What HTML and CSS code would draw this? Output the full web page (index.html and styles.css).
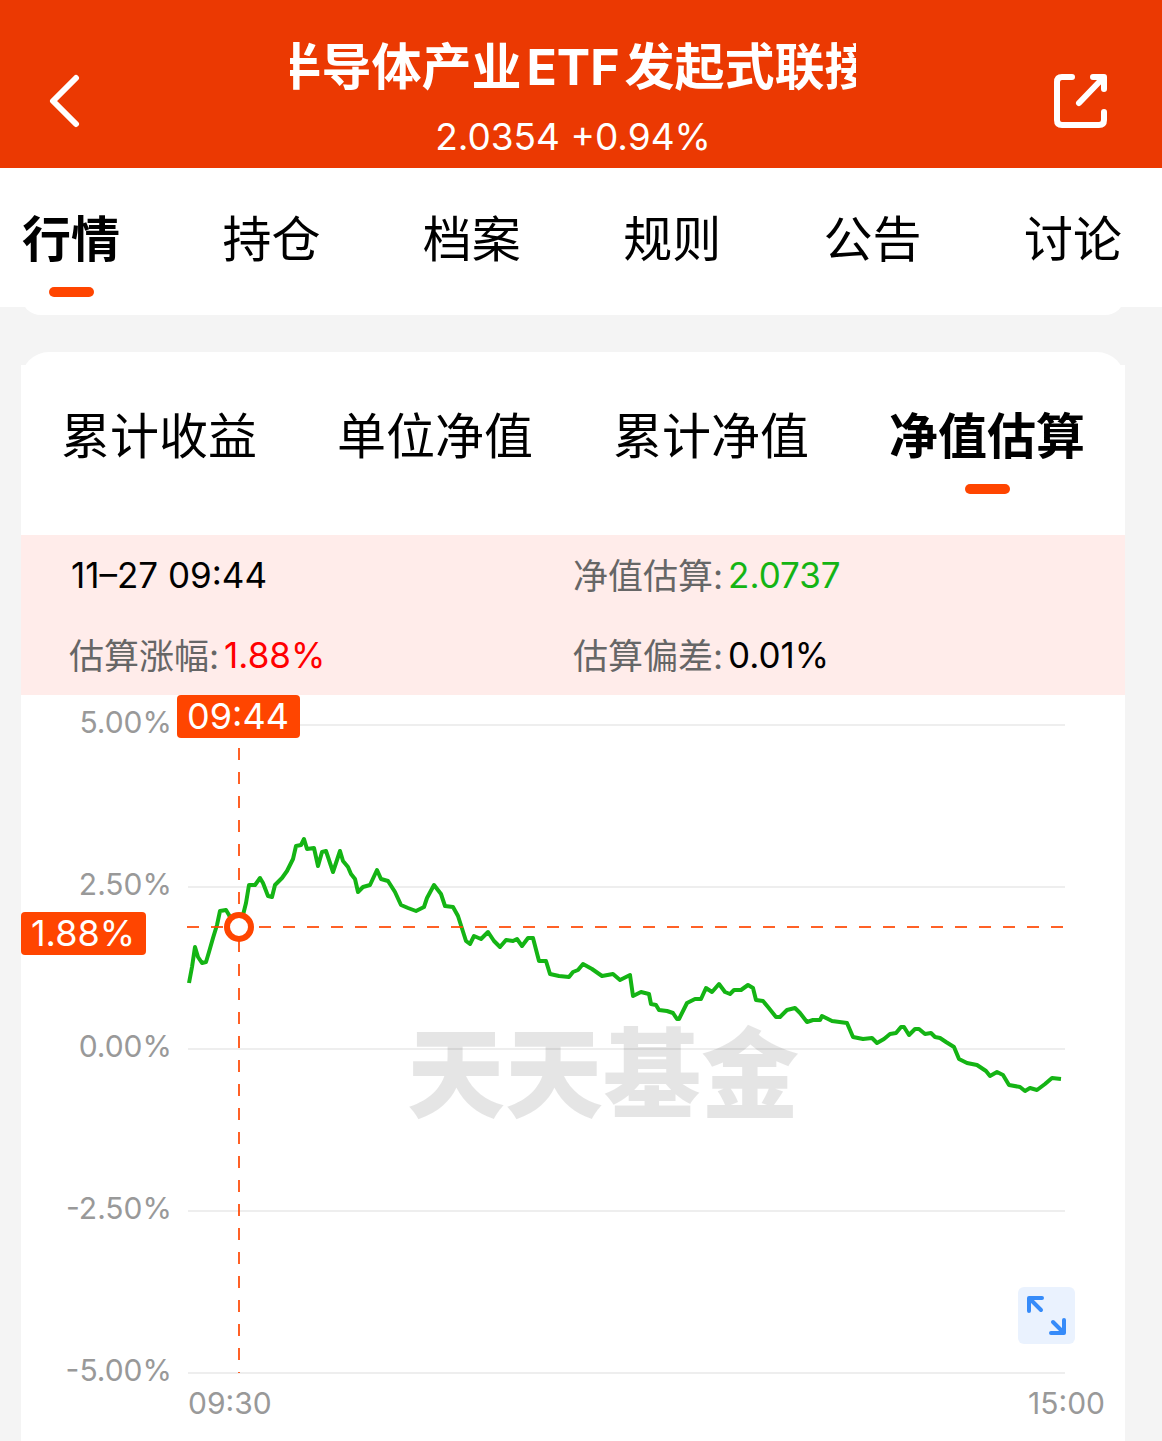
FILE: index.html
```html
<!DOCTYPE html>
<html lang="zh-CN">
<head>
    <meta charset="UTF-8">
    <meta name="viewport" content="width=device-width, initial-scale=1.0">
    <title>半导体产业ETF发起式联接</title>
    <link rel="stylesheet" href="styles.css">
</head>
<body>

    <header class="header">
        <button type="button" class="icon-button" aria-label="返回">
            <svg width="32" height="60" viewBox="0 0 32 60">
                <path d="M28 7 L5 30 L28 53" />
            </svg>
        </button>
        <div class="fund">
            <h1 class="fund-name"><span>半导体产业<span class="latin">ETF</span>发起式联接</span></h1>
            <p class="fund-price">2.0354 +0.94%</p>
        </div>
        <button type="button" class="icon-button" aria-label="分享">
            <svg width="60" height="60" viewBox="0 0 60 60">
                <path d="M22 6 H12 Q7 6 7 11 V49 Q7 54 12 54 H49 Q54 54 54 49 V41" />
                <path d="M43 6 H54 V18 M53 7 L29 32" />
            </svg>
        </button>
    </header>

    <nav class="tabs">
        <a href="#quote" class="tab active">行情</a>
        <a href="#holdings" class="tab">持仓</a>
        <a href="#archive" class="tab">档案</a>
        <a href="#rules" class="tab">规则</a>
        <a href="#notice" class="tab">公告</a>
        <a href="#discuss" class="tab">讨论</a>
    </nav>

    <main class="content">
        <div class="card-end"></div>

        <section class="card">
            <div class="card-body">
                <div class="chart-tabs">
                    <button type="button" class="tab">累计收益</button>
                    <button type="button" class="tab">单位净值</button>
                    <button type="button" class="tab">累计净值</button>
                    <button type="button" class="tab active">净值估算</button>
                </div>

                <div class="info">
                    <div class="info-item date">11–27 09:44</div>
                    <div class="info-item"><span class="label">净值估算:</span><span class="down">2.0737</span></div>
                    <div class="info-item"><span class="label">估算涨幅:</span><span class="up">1.88%</span></div>
                    <div class="info-item"><span class="label">估算偏差:</span><span>0.01%</span></div>
                </div>

                <div class="chart">
                    <svg class="chart-svg" viewBox="0 0 1104 746">
                        <!-- grid -->
                        <path class="grid" d="M167 30 H1044 M167 192 H1044 M167 354 H1044 M167 516 H1044 M167 678 H1044" />
                        <text class="watermark" x="582" y="415">天天基金</text>

                        <!-- axis labels -->
                        <text class="axis axis-y" x="151" y="38">5.00%</text>
                        <text class="axis axis-y" x="151" y="200">2.50%</text>
                        <text class="axis axis-y" x="151" y="362">0.00%</text>
                        <text class="axis axis-y" x="151" y="524">-2.50%</text>
                        <text class="axis axis-y" x="151" y="686">-5.00%</text>
                        <text class="axis" x="167" y="719">09:30</text>
                        <text class="axis axis-y" x="1084" y="719">15:00</text>

                        <!-- estimated value -->
                        <polyline class="line" points="168,288 171,272 174,252 177,262 181,268 185,267 188,257 192,243 196,230 199,216 205,215 208,220 212,230 218,232 222,220 225,208 228,190 234,190 239,183 242,188 247,201 251,202 254,190 261,183 266,176 272,164 275,151 280,150 283,144 286,154 293,153 297,171 301,157 305,156 312,177 319,156 322,166 327,172 330,179 334,184 337,197 342,192 349,190 356,175 360,184 367,186 374,197 380,210 387,213 395,216 403,212 406,203 413,190 420,199 424,211 432,212 437,221 445,246 449,249 453,241 460,244 467,237 473,246 479,252 485,245 492,246 496,244 501,251 507,243 512,243 518,266 525,266 529,279 538,281 548,282 552,277 557,275 562,269 571,274 581,281 592,279 599,285 609,280 612,301 620,297 628,299 630,309 635,310 638,315 646,316 652,318 656,324 658,324 666,308 674,304 680,304 685,293 691,297 698,289 704,297 709,299 713,295 720,295 727,290 732,293 735,305 742,306 747,312 755,322 759,322 766,315 774,313 779,318 786,327 792,325 799,325 801,321 811,326 826,328 832,342 842,344 851,343 856,348 863,344 869,339 875,338 880,332 883,332 888,340 894,334 898,334 904,339 910,338 914,342 919,343 925,347 933,352 938,364 946,368 956,370 965,376 969,381 976,377 982,380 988,390 999,392 1004,396 1009,393 1016,395 1024,389 1031,383 1040,384" />

                        <!-- crosshair -->
                        <path class="cross" d="M218 53 V678" />
                        <path class="cross" d="M166 232 H1044" />
                        <circle class="point" cx="218" cy="232" r="12" />
                        <rect class="tag" x="156" y="0" width="123" height="43" rx="4" />
                        <text class="tag-text" x="217" y="34">09:44</text>
                        <rect class="tag" x="0" y="217" width="125" height="43" rx="4" />
                        <text class="tag-text" x="62" y="251">1.88%</text>
                    </svg>
                    <button type="button" class="expand" aria-label="全屏">
                        <svg width="57" height="57" viewBox="0 0 57 57">
                            <path d="M11 24 V11 H24 M12 12 L23 23" />
                            <path d="M46 33 V46 H33 M45 45 L35 35" />
                        </svg>
                    </button>
                </div>
            </div>
        </section>
    </main>

</body>
</html>
```
FILE: styles.css
```css
* {
    box-sizing: border-box;
}

body {
    font-family: Inter, "Noto Sans CJK SC", sans-serif;
    margin: 0;
    padding: 0;
    background-color: #f4f4f4;
    color: #000;
}

button {
    border: none;
    padding: 0;
    background: none;
    font-family: inherit;
    color: inherit;
    cursor: pointer;
}

/* Header */
.header {
    display: flex;
    justify-content: space-between;
    align-items: flex-end;
    height: 168px;
    padding: 0 52px 0 48px;
    background-color: #eb3902;
    color: #fff;
}

.icon-button {
    display: flex;
    justify-content: flex-start;
    min-width: 48px;
    margin-bottom: 37px;
}

.icon-button svg {
    fill: none;
    stroke: #fff;
    stroke-width: 6;
    stroke-linecap: round;
    stroke-linejoin: round;
}

.fund {
    flex: 1;
    max-width: 566px;
    padding-bottom: 7px;
    text-align: center;
}

.fund-name {
    display: flex;
    justify-content: center;
    overflow: hidden;
    margin: 0;
    font-size: 50px;
    line-height: 68px;
    font-weight: 700;
    white-space: nowrap;
}

.latin {
    margin: 0 5px;
}

.fund-price {
    margin: 0;
    padding-top: 12px;
    font-size: 37px;
    line-height: 48px;
}

/* Tabs */
.tabs {
    display: flex;
    justify-content: space-between;
    padding: 36px 40px 10px 22px;
    background-color: #fff;
}

.tab {
    display: flex;
    flex-direction: column;
    align-items: center;
    font-size: 49px;
    line-height: 72px;
    color: #000;
    text-decoration: none;
}

.tab::after {
    content: "";
    width: 45px;
    height: 10px;
    margin-top: 11px;
    border-radius: 5px;
}

.tab.active {
    font-weight: 700;
}

.tab.active::after {
    background-color: #ff4500;
}

/* Cards */
.content {
    padding: 0 37px 0 21px;
}

.card-end {
    height: 28px;
    margin-top: -20px;
    margin-bottom: 37px;
    border-radius: 0 0 20px 20px;
}

.card-end,
.card,
.card-body {
    background-color: #fff;
}

.card {
    padding-top: 13px;
    border-radius: 28px 28px 0 0;
}

.chart-tabs {
    display: grid;
    grid-template-columns: repeat(4, 1fr);
    padding: 36px 0 41px;
}

/* Values at the selected time */
.info {
    display: grid;
    grid-template-columns: 1fr 1fr;
    padding: 0 48px;
    background-color: #ffecea;
}

.info-item {
    display: flex;
    align-items: center;
    gap: 5px;
    height: 80px;
    font-size: 35px;
}

.label {
    padding-bottom: 4px;
    color: #666;
}

.date {
    padding-left: 2px;
}

.up {
    color: #ff0000;
}

.down {
    color: #14b414;
}

/* Chart */
.chart {
    position: relative;
}

.chart-svg {
    display: block;
    width: 100%;
}

.grid {
    stroke: #eee;
    stroke-width: 2;
}

.watermark {
    font-size: 98px;
    font-weight: 900;
    fill: rgba(0, 0, 0, 0.1);
    text-anchor: middle;
}

.axis {
    font-size: 30px;
    fill: #999;
}

.axis-y {
    text-anchor: end;
}

.line {
    fill: none;
    stroke: #14b414;
    stroke-width: 4;
    stroke-linejoin: round;
}

.cross {
    fill: none;
    stroke: #ff4500;
    stroke-width: 2;
    stroke-opacity: 0.85;
    stroke-dasharray: 12 12;
}

.point {
    fill: #fff;
    stroke: #ff4500;
    stroke-width: 6;
}

.tag {
    fill: #ff4500;
}

.tag-text {
    font-size: 36px;
    fill: #fff;
    text-anchor: middle;
}

.expand {
    position: absolute;
    right: 50px;
    bottom: 97px;
    display: flex;
    border-radius: 6px;
    background-color: #eaf2fe;
}

.expand svg {
    fill: none;
    stroke: #368bf9;
    stroke-width: 4;
    stroke-linecap: round;
    stroke-linejoin: round;
}
```
